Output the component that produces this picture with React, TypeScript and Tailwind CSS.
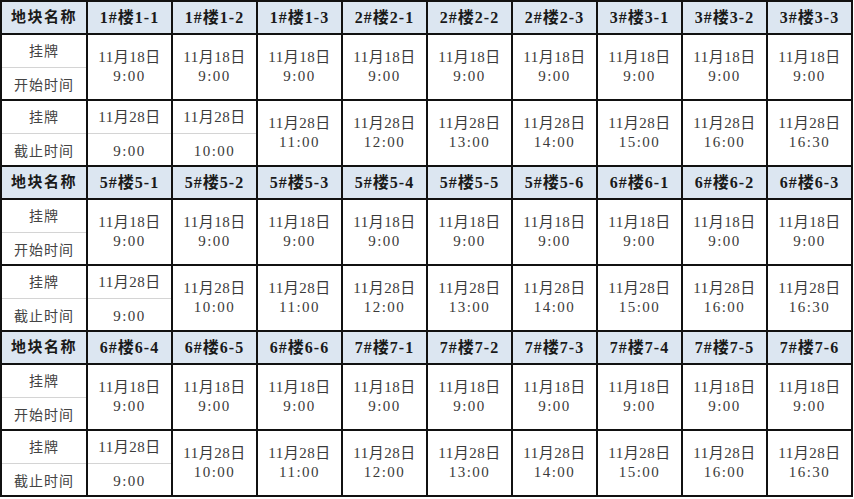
import React from "react";

type Section = { heads: string[]; split: number };

const sections: Section[] = [
  { heads: ["1#楼1-1", "1#楼1-2", "1#楼1-3", "2#楼2-1", "2#楼2-2", "2#楼2-3", "3#楼3-1", "3#楼3-2", "3#楼3-3"], split: 2 },
  { heads: ["5#楼5-1", "5#楼5-2", "5#楼5-3", "5#楼5-4", "5#楼5-5", "5#楼5-6", "6#楼6-1", "6#楼6-2", "6#楼6-3"], split: 1 },
  { heads: ["6#楼6-4", "6#楼6-5", "6#楼6-6", "7#楼7-1", "7#楼7-2", "7#楼7-3", "7#楼7-4", "7#楼7-5", "7#楼7-6"], split: 1 },
];

const endTimes = ["9:00", "10:00", "11:00", "12:00", "13:00", "14:00", "15:00", "16:00", "16:30"];

const font = { fontFamily: '"Liberation Serif", "Noto Sans CJK SC", serif' };

const Label = ({ bottom }: { bottom: string }) => (
  <div className="flex h-[64px] flex-col bg-white text-[14px] tracking-[1px] text-[#444]">
    <div className="flex h-[32px] items-center justify-center">挂牌</div>
    <div className="flex h-[32px] items-center justify-center border-t border-[#d4d4d4] pt-[3px]">{bottom}</div>
  </div>
);

const Split = ({ date, time }: { date: string; time: string }) => (
  <div className="flex h-[64px] flex-col bg-white text-[15px] tracking-[0.5px] text-[#3a3a3a]">
    <div className="flex h-[32px] items-center justify-center">{date}</div>
    <div className="flex h-[32px] items-center justify-center border-t border-[#d4d4d4] pt-[3px] tracking-[1.5px]">{time}</div>
  </div>
);

const Both = ({ date, time }: { date: string; time: string }) => (
  <div className="flex h-[64px] flex-col items-center justify-center bg-white text-[15px] leading-[19px] tracking-[0.5px] text-[#3a3a3a]">
    <div>{date}</div>
    <div className="tracking-[1.5px]">{time}</div>
  </div>
);

export default function App() {
  return (
    <div className="min-h-screen bg-white" style={font}>
      <div className="inline-grid grid-cols-[84px_repeat(9,83px)] gap-[2px] bg-[#111] p-[2px]">
        {sections.map((s, si) => (
          <React.Fragment key={si}>
            <div className="flex h-[31px] items-center justify-center bg-[#dce6f1] text-[15px] font-bold tracking-[1.5px] text-[#1a1a1a]">
              地块名称
            </div>
            {s.heads.map((h) => (
              <div key={h} className="flex h-[31px] items-center justify-center bg-[#dce6f1] text-[16px] font-bold tracking-[1px] text-[#1a1a1a]">
                {h}
              </div>
            ))}

            <Label bottom="开始时间" />
            {s.heads.map((h) => (
              <Both key={h + "s"} date="11月18日" time="9:00" />
            ))}

            <Label bottom="截止时间" />
            {s.heads.map((h, i) =>
              i < s.split ? (
                <Split key={h + "e"} date="11月28日" time={endTimes[i]} />
              ) : (
                <Both key={h + "e"} date="11月28日" time={endTimes[i]} />
              )
            )}
          </React.Fragment>
        ))}
      </div>
    </div>
  );
}
